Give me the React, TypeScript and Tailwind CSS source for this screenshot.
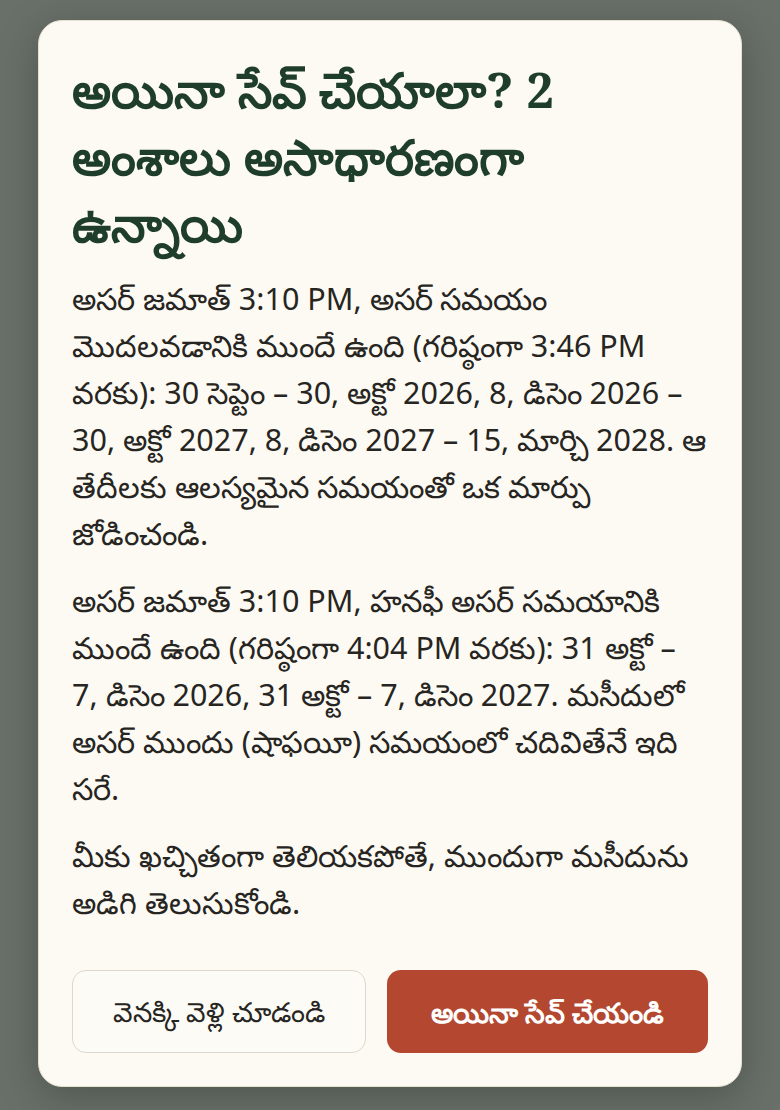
import React from 'react';

const paragraphs = [
  'అసర్ జమాత్ 3:10 PM, అసర్ సమయం మొదలవడానికి ముందే ఉంది (గరిష్ఠంగా 3:46 PM వరకు): 30 సెప్టెం – 30, అక్టో 2026, 8, డిసెం 2026 – 30, అక్టో 2027, 8, డిసెం 2027 – 15, మార్చి 2028. ఆ తేదీలకు ఆలస్యమైన సమయంతో ఒక మార్పు జోడించండి.',
  'అసర్ జమాత్ 3:10 PM, హనఫీ అసర్ సమయానికి ముందే ఉంది (గరిష్ఠంగా 4:04 PM వరకు): 31 అక్టో – 7, డిసెం 2026, 31 అక్టో – 7, డిసెం 2027. మసీదులో అసర్ ముందు (షాఫయీ) సమయంలో చదివితేనే ఇది సరే.',
  'మీకు ఖచ్చితంగా తెలియకపోతే, ముందుగా మసీదును అడిగి తెలుసుకోండి.',
];

export default function App() {
  return (
    <div className="min-h-[1110px] bg-[#697069] px-[38px] pt-[20px] pb-[22px] font-['Noto_Sans',sans-serif]">
      <div className="rounded-[24px] border border-[#e6e1cf] bg-[#fdfaf3] px-[33px] pt-[35px] pb-[33px] shadow-[0_10px_40px_rgba(0,0,0,0.25)]">
        <h2 className="pr-[8px] font-['Noto_Serif','DejaVu_Serif',serif] text-[49px] font-bold leading-[67px] text-[#1e3d2b]">
          అయినా సేవ్ చేయాలా? 2 అంశాలు అసాధారణంగా ఉన్నాయి
        </h2>
        <div className="mt-[18px] space-y-[20px] text-[30.5px] leading-[47px] text-[#262522]">
          {paragraphs.map((p, i) => (
            <p key={i}>{p}</p>
          ))}
        </div>
        <div className="mt-[44px] flex gap-[21px]">
          <button className="h-[83px] w-[294px] rounded-[14px] border border-[#dcd8cf] bg-[#fdfbf6] text-[27.5px] text-[#262522]">
            వెనక్కి వెళ్లి చూడండి
          </button>
          <button className="h-[83px] flex-1 rounded-[14px] bg-[#b3472f] text-[28px] font-semibold text-white">
            అయినా సేవ్ చేయండి
          </button>
        </div>
      </div>
    </div>
  );
}
